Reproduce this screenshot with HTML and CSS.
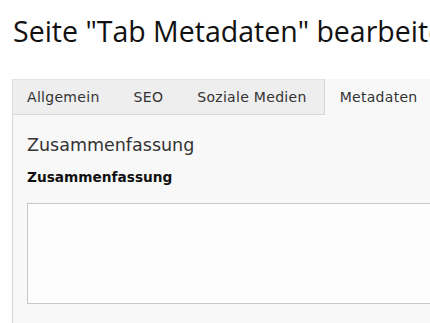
FILE: index.html
```html
<!DOCTYPE html>
<html lang="de">
<head>
<meta charset="utf-8">
<link rel="stylesheet" href="styles.css">
</head>
<body>
<div class="page">
  <h1 class="title">Seite "Tab Metadaten" bearbeiten</h1>
  <div class="tabs">
    <div class="tab first">Allgemein</div>
    <div class="tab">SEO</div>
    <div class="tab">Soziale Medien</div>
    <div class="tab active">Metadaten</div>
  </div>
  <div class="panel">
    <div class="legend">Zusammenfassung</div>
    <label class="label">Zusammenfassung</label>
    <div class="textarea"></div>
  </div>
</div>
</body>
</html>
```
FILE: styles.css
```css
html, body {
  margin: 0;
  padding: 0;
  background: #ffffff;
  overflow: hidden;
}
.page {
  width: 418px;
  padding: 0 0 0 12px;
  overflow: hidden;
}
.title {
  margin: 0;
  padding: 13px 0 0 1px;
  height: 79px;
  box-sizing: border-box;
  font-family: "Open Sans", sans-serif;
  font-weight: 400;
  font-size: 28.5px;
  line-height: 36px;
  color: #111;
  white-space: nowrap;
}
.tabs {
  display: flex;
  background: #eeeeee;
  border-top: 1px solid #e2e2e2;
  border-bottom: 1px solid #d6d6d6;
  border-left: 1px solid #dddddd;
  height: 36px;
  box-sizing: border-box;
  font-family: "DejaVu Sans", Verdana, sans-serif;
  font-size: 14px;
  letter-spacing: 0.3px;
  color: #333;
}
.tab {
  padding: 0 17px;
  line-height: 34px;
  white-space: nowrap;
}
.tab.first {
  padding-left: 14px;
}
.tab.active {
  background: #f8f8f8;
  border-left: 1px solid #d6d6d6;
  margin-top: -1px;
  margin-bottom: -1px;
  padding-top: 1px;
  line-height: 34px;
  padding-left: 15px;
  flex: 1;
}
.panel {
  background: #f8f8f8;
  border-left: 1px solid #d6d6d6;
  padding: 20px 0 20px 14px;
  font-family: "DejaVu Sans", Verdana, sans-serif;
}
.legend {
  font-size: 17.5px;
  color: #333;
  line-height: 20px;
  font-weight: 400;
}
.label {
  display: block;
  font-size: 13.7px;
  font-weight: bold;
  color: #111;
  margin-top: 14px;
  line-height: 16px;
}
.textarea {
  margin-top: 18px;
  height: 101px;
  background: #fdfdfd;
  border: 1px solid #c8c8c8;
  border-right: none;
  box-sizing: border-box;
}
```
